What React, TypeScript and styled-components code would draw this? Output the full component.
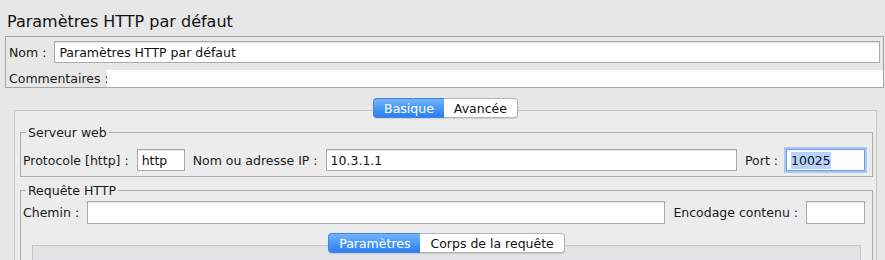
import React from 'react';
import styled, { createGlobalStyle } from 'styled-components';

const GlobalStyle = createGlobalStyle`
  html, body {
    margin: 0;
    padding: 0;
    background: #e7e7e7;
    overflow: hidden;
  }
  body {
    font-family: "DejaVu Sans", "Liberation Sans", sans-serif;
    font-size: 12.5px;
    color: #1a1a1a;
  }
`;

const Page = styled.div`
  width: 885px;
  height: 260px;
  overflow: hidden;
`;

const Title = styled.h1`
  margin: 0;
  padding: 12px 0 4px 7px;
  font-size: 16px;
  line-height: 20px;
  font-weight: normal;
  color: #111;
`;

const NamePanel = styled.div`
  margin: 0 1px 0 5px;
  border: 1px solid #9fa79f;
  display: flex;
  flex-direction: column;
`;

const Row = styled.div<{ $pt?: number; $pr?: number; $pl?: number }>`
  display: flex;
  align-items: center;
  gap: 8px;
  padding: ${p => p.$pt ?? 0}px ${p => p.$pr ?? 0}px 0 ${p => p.$pl ?? 0}px;
`;

const Label = styled.span`
  white-space: nowrap;
  line-height: 15px;
`;

const Field = styled.div<{ $w?: number; $h?: number; $focused?: boolean }>`
  box-sizing: border-box;
  height: ${p => p.$h ?? 22}px;
  ${p => (p.$w ? `width: ${p.$w}px; flex: none;` : 'flex: 1;')}
  background: #fff;
  border: 1px solid ${p => (p.$focused ? '#6f9ee6' : '#aaaaaa')};
  box-shadow: ${p => (p.$focused ? '0 0 0 2px #a9c8f4' : 'inset 0 1px 0 #e4e4e4')};
  padding: 0 4px;
  display: flex;
  align-items: center;
  white-space: nowrap;
  overflow: hidden;
  color: #111;
`;

const Selected = styled.span`
  background: #b5d3fb;
  padding: 1px 0;
`;

const CommentArea = styled.div`
  flex: 1;
  height: 17px;
  background: #fff;
  margin-left: -10px;
`;

const TabbedPane = styled.div<{ $mt: number; $ml: number; $mr: number }>`
  margin: ${p => p.$mt}px ${p => p.$mr}px 0 ${p => p.$ml}px;
  display: flex;
  flex-direction: column;
`;

const TabBar = styled.div`
  display: flex;
  justify-content: center;
  position: relative;
  z-index: 1;
`;

const Tab = styled.div<{ $active?: boolean }>`
  height: 20px;
  box-sizing: border-box;
  padding: 0 10px;
  display: flex;
  align-items: center;
  line-height: 15px;
  border: 1px solid ${p => (p.$active ? '#3f86e6' : '#b4b4b4')};
  background: ${p => (p.$active ? 'linear-gradient(#72b4fb, #2a7ef1)' : '#fff')};
  color: ${p => (p.$active ? '#fff' : '#111')};
  box-shadow: 0 1px 1px rgba(0, 0, 0, 0.12);
  &:first-child {
    border-radius: 4px 0 0 4px;
    border-right: none;
  }
  &:last-child {
    border-radius: 0 4px 4px 0;
    border-left: none;
  }
`;

const Pane = styled.div<{ $pad: string; $bg: string }>`
  margin-top: -8px;
  border: 1px solid #c6c6c6;
  background: ${p => p.$bg};
  padding: ${p => p.$pad};
  min-height: 40px;
`;

const Group = styled.fieldset<{ $mt?: number }>`
  margin: ${p => p.$mt ?? 0}px 0 0 0;
  padding: 0 7px 5px 2px;
  border: 1px solid #ababab;
  min-width: 0;
`;

const Legend = styled.legend`
  padding: 0 2px;
  margin-left: 3px;
  line-height: 15px;
`;

export default function App() {
  return (
    <Page>
      <GlobalStyle />
      <Title>Paramètres HTTP par défaut</Title>
      <NamePanel>
        <Row $pt={4} $pr={3} $pl={3}>
          <Label>Nom :</Label>
          <Field $h={22}>Paramètres HTTP par défaut</Field>
        </Row>
        <Row $pt={7} $pl={3}>
          <Label>Commentaires :</Label>
          <CommentArea />
        </Row>
      </NamePanel>

      <TabbedPane $mt={10} $ml={14} $mr={8}>
        <TabBar>
          <Tab $active>Basique</Tab>
          <Tab>Avancée</Tab>
        </TabBar>
        <Pane $pad="14px 3px 0 5px" $bg="#ececec">
          <Group>
            <Legend>Serveur web</Legend>
            <Row $pt={9}>
              <Label>Protocole [http] :</Label>
              <Field $w={48}>http</Field>
              <Label>Nom ou adresse IP :</Label>
              <Field>10.3.1.1</Field>
              <Label>Port :</Label>
              <Field $w={79} $focused>
                <Selected>10025</Selected>
              </Field>
            </Row>
          </Group>
          <Group $mt={6}>
            <Legend>Requête HTTP</Legend>
            <Row $pt={3}>
              <Label>Chemin :</Label>
              <Field $h={23}>&nbsp;</Field>
              <Label>Encodage contenu :</Label>
              <Field $w={59} $h={23}>&nbsp;</Field>
            </Row>
            <TabbedPane $mt={9} $ml={9} $mr={4}>
              <TabBar>
                <Tab $active>Paramètres</Tab>
                <Tab>Corps de la requête</Tab>
              </TabBar>
              <Pane $pad="0" $bg="#e3e3e6">
                &nbsp;
              </Pane>
            </TabbedPane>
          </Group>
        </Pane>
      </TabbedPane>
    </Page>
  );
}
